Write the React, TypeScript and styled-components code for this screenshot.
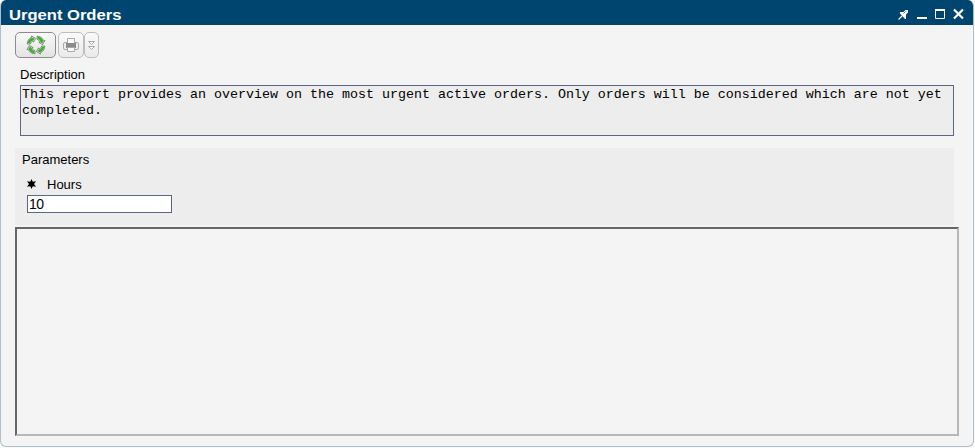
import React from "react";
import styled, { createGlobalStyle } from "styled-components";

const GlobalStyle = createGlobalStyle`
  * { box-sizing: border-box; }
  body { margin: 0; background: #f8f8f8; overflow: hidden; }
`;

const Window = styled.main`
  display: flex;
  flex-direction: column;
  width: 974px;
  height: 447px;
  overflow: hidden;
  border-radius: 6px;
  border: 1px solid #b0bfca;
  border-top: 0;
  background: #f4f4f4;
  color: #000;
  font: 13px/16px "Liberation Sans", Arial, sans-serif;
`;

const TitleBar = styled.header`
  display: flex;
  justify-content: space-between;
  flex: none;
  height: 25px;
  margin: 0 -1px;
  padding: 0 10px 0 9px;
  background: #00456f;
  color: #fff;
`;

const Title = styled.h1`
  margin: 0;
  padding-top: 5px;
  font-size: 15px;
  line-height: 20px;
  font-weight: bold;
  transform: scaleX(1.105);
  transform-origin: left;
`;

const WindowControls = styled.svg`
  display: block;
  width: 68px;
  height: 25px;
`;

const Toolbar = styled.div`
  display: flex;
  padding: 7px 0 0 14px;
`;

const ToolButton = styled.button<{ $width: number; $muted?: boolean; $gap?: number }>`
  display: flex;
  align-items: center;
  justify-content: center;
  width: ${(p) => p.$width}px;
  height: 26px;
  margin: 0 ${(p) => p.$gap ?? 0}px 0 0;
  padding: 0;
  border: 1px solid ${(p) => (p.$muted ? "#bdbdbd" : "#8c8c8c")};
  border-radius: 5px;
  background: linear-gradient(#fafafa, ${(p) => (p.$muted ? "#eaeaea" : "#e3e3e3")});
`;

const Icon = styled.svg`
  display: block;
  flex: none;
`;

const DescriptionLabel = styled.label`
  margin: 9px 0 2px 19px;
`;

const DescriptionBox = styled.div`
  width: 934px;
  height: 51px;
  margin-left: 19px;
  padding: 1px;
  border: 1px solid #5d6683;
  background: #ededed;
  font: 13.333px/16px "Liberation Mono", "Courier New", monospace;
`;

const Parameters = styled.section`
  display: flex;
  flex-direction: column;
  width: 939px;
  height: 77px;
  margin: 12px 0 0 14px;
  padding: 4px 0 0 7px;
  background: #ededed;
`;

const FieldLabel = styled.label`
  display: flex;
  align-items: center;
  gap: 11px;
  margin: 9px 0 2px 5px;
`;

const RequiredMark = styled(Icon)`
  margin-bottom: 2px;
`;

const HoursInput = styled.input`
  width: 145px;
  height: 18px;
  margin-left: 5px;
  padding: 0 1px 1px 1px;
  border: 1px solid #5d6683;
  outline: 0;
  background: #fff;
  color: #000;
  font: 14px/15px "Liberation Sans", Arial, sans-serif;
  letter-spacing: -0.6px;
`;

const ReportFrame = styled.section`
  width: 944px;
  height: 209px;
  margin: 2px 0 0 14px;
  border: 2px solid;
  border-color: #666 #b8b8b8 #b8b8b8 #666;
`;

function RefreshIcon() {
  return (
    <Icon width="20" height="20" viewBox="0 0 20 20">
      {[0, 90, 180, 270].map((angle) => (
        <g key={angle} transform={`rotate(${angle} 10 10)`} strokeLinejoin="round">
          <path d="M11 1.2C14.2 1.2 16.7 3 17.7 5.6L19 5.5 16.6 9.6 12.8 7.4 14 6.8C13.3 5.4 12.4 4.7 11 4.4Z" fill="#cfe8c8" stroke="#596b59" strokeWidth=".7" />
          <path d="M11.8 1.7C14.8 2.1 16.5 3.9 17.3 6.3L16.3 8.4 14.5 7.2C14.4 5.4 13.3 4.3 11.8 4Z" fill="#3cae29" />
        </g>
      ))}
    </Icon>
  );
}

function PrinterIcon() {
  return (
    <Icon width="16" height="16" viewBox="0 0 16 16">
      <rect x=".5" y="5.5" width="15" height="7" rx="1.5" fill="#eee" stroke="#aaa" />
      <path d="M4.5 6.5v-5h7v5" fill="#fafafa" stroke="#aaa" />
      <path d="M3 6h10v5H3z" fill="#8b8b8b" />
      <path d="M4.5 10.5h7v4h-7z" fill="#fafafa" stroke="#aaa" />
    </Icon>
  );
}

function App() {
  return (
    <>
      <GlobalStyle />
      <Window>
        <TitleBar>
          <Title>Urgent Orders</Title>
          <WindowControls viewBox="0 0 68 25" fill="none" stroke="#fff">
            <path d="M2.5 19.5 6 16" strokeWidth="1.2" />
            <path d="M4 12H7.5L9.5 10H12V12.5L10 14.5V19H9L4 13.5Z" fill="#fff" stroke="none" />
            <path d="m7.5 13.5 2-2" stroke="#00456f" strokeWidth=".7" />
            <path d="M21 18h10" strokeWidth="2" />
            <path d="M39.5 10v8.5h9V10" />
            <path d="M39 10h10" strokeWidth="2" />
            <path d="m58 9.5 9 9m0-9-9 9" strokeWidth="2.2" />
          </WindowControls>
        </TitleBar>
        <Toolbar>
          <ToolButton $width={41} $gap={2} aria-label="Refresh"><RefreshIcon /></ToolButton>
          <ToolButton $width={26} $muted aria-label="Print"><PrinterIcon /></ToolButton>
          <ToolButton $width={15} $muted aria-label="More">
            <Icon width="7" height="11" viewBox="0 0 7 11" fill="#fafafa" stroke="#aaa">
              <path d="M.5 1.5h6l-3 3ZM.5 6.5h6l-3 3Z" />
            </Icon>
          </ToolButton>
        </Toolbar>
        <DescriptionLabel>Description</DescriptionLabel>
        <DescriptionBox>
          This report provides an overview on the most urgent active orders. Only orders will be considered which are not yet completed.
        </DescriptionBox>
        <Parameters>
          <span>Parameters</span>
          <FieldLabel htmlFor="hours">
            <RequiredMark width="9" height="10" viewBox="0 0 9 10">
              <path d="M4.5 0 5.8 2.8 9 2.2 7 5 9 7.8 5.8 7.2 4.5 10 3.2 7.2 0 7.8 2 5 0 2.2 3.2 2.8Z" />
            </RequiredMark>
            Hours
          </FieldLabel>
          <HoursInput id="hours" defaultValue="10" />
        </Parameters>
        <ReportFrame />
      </Window>
    </>
  );
}

export default App;
